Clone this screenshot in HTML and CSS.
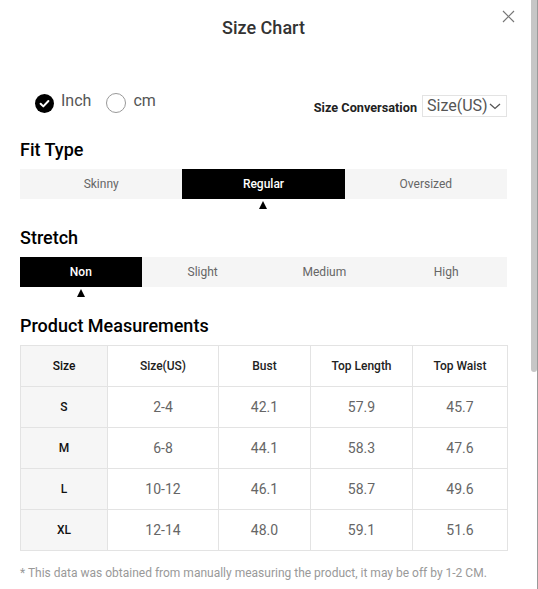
FILE: index.html
```html
<!DOCTYPE html>
<html>
<head>
<meta charset="utf-8">
<link rel="stylesheet" href="styles.css">
</head>
<body>
<div class="modal">
  <h1 class="title">Size Chart</h1>
  <button class="close" aria-label="close">
    <svg width="13" height="13" viewBox="0 0 13 13"><path d="M1 1L12 12M12 1L1 12" stroke="#777" stroke-width="1.2" fill="none"/></svg>
  </button>

  <div class="unit-row">
    <div class="units">
      <span class="check">
        <svg width="19" height="19" viewBox="0 0 19 19"><circle cx="9.5" cy="9.5" r="9.5" fill="#000"/><path d="M5.6 9.8L8.3 12.4L13.4 7" stroke="#fff" stroke-width="2" fill="none" stroke-linecap="round" stroke-linejoin="round"/></svg>
      </span>
      <span class="unit-label">Inch</span>
      <span class="radio"></span>
      <span class="unit-label">cm</span>
    </div>
    <div class="conv">
      <span class="conv-label">Size Conversation</span>
      <span class="select">Size(US)<svg width="12" height="7" viewBox="0 0 12 7"><path d="M1 1L6 5.5L11 1" stroke="#555" stroke-width="1.3" fill="none"/></svg></span>
    </div>
  </div>

  <h2 class="section first">Fit Type</h2>
  <div class="seg seg3">
    <span class="opt">Skinny</span>
    <span class="opt active">Regular</span>
    <span class="opt">Oversized</span>
  </div>
  <div class="tri-row seg3">
    <span></span><span class="tri"></span><span></span>
  </div>

  <h2 class="section">Stretch</h2>
  <div class="seg seg4">
    <span class="opt active">Non</span>
    <span class="opt">Slight</span>
    <span class="opt">Medium</span>
    <span class="opt">High</span>
  </div>
  <div class="tri-row seg4">
    <span class="tri"></span><span></span><span></span><span></span>
  </div>

  <h2 class="section">Product Measurements</h2>
  <table class="chart">
    <colgroup>
      <col class="c1"><col class="c2"><col class="c3"><col class="c4"><col class="c5">
    </colgroup>
    <thead>
      <tr><th class="sz">Size</th><th>Size(US)</th><th>Bust</th><th>Top Length</th><th>Top Waist</th></tr>
    </thead>
    <tbody>
      <tr><th class="sz">S</th><td>2-4</td><td>42.1</td><td>57.9</td><td>45.7</td></tr>
      <tr><th class="sz">M</th><td>6-8</td><td>44.1</td><td>58.3</td><td>47.6</td></tr>
      <tr><th class="sz">L</th><td>10-12</td><td>46.1</td><td>58.7</td><td>49.6</td></tr>
      <tr><th class="sz">XL</th><td>12-14</td><td>48.0</td><td>59.1</td><td>51.6</td></tr>
    </tbody>
  </table>
  <p class="note">* This data was obtained from manually measuring the product, it may be off by 1-2 CM.</p>
</div>
<div class="scroll-thumb"></div>
<div class="edge"></div>
</body>
</html>
```

FILE: styles.css
```css
html, body {
  margin: 0;
  padding: 0;
  background: #fff;
}
body {
  width: 538px;
  height: 589px;
  overflow: hidden;
  font-family: Roboto, "Liberation Sans", Arial, sans-serif;
  position: relative;
}
.modal {
  position: relative;
  padding: 15px 31px 0 20px;
}
.title {
  margin: 0;
  text-align: center;
  font-size: 18px;
  line-height: 26px;
  font-weight: 500;
  color: #333;
}
.close {
  position: absolute;
  left: 502px;
  top: 10px;
  width: 13px;
  height: 13px;
  padding: 0;
  border: 0;
  background: none;
  display: block;
}
.close svg { display: block; }

.unit-row {
  margin-top: 53px;
  height: 24px;
  display: flex;
  align-items: center;
  justify-content: space-between;
}
.units {
  display: flex;
  align-items: center;
  margin-left: 15px;
  margin-bottom: 6px;
}
.check { width: 19px; height: 19px; display: block; }
.check svg { display: block; }
.unit-label {
  font-size: 16px;
  color: #555;
  margin-left: 7px;
  line-height: 20px;
  position: relative;
  top: -2px;
}
.radio {
  width: 18px;
  height: 18px;
  border: 1px solid #999;
  border-radius: 50%;
  margin-left: 15px;
}
.conv {
  display: flex;
  align-items: center;
}
.conv-label {
  font-size: 12.7px;
  font-weight: 700;
  color: #222;
  margin-top: 2px;
}
.select {
  margin-left: 5px;
  height: 22px;
  width: 85px;
  box-sizing: border-box;
  border: 1px solid #e3e3e3;
  display: flex;
  align-items: center;
  padding-left: 4px;
  font-size: 16px;
  color: #555;
  line-height: 20px;
}
.select svg { margin-left: 1px; margin-top: 1px; }

.section {
  margin: 22px 0 8px;
  font-size: 18px;
  line-height: 22px;
  font-weight: 500;
  color: #000;
}
.section.first { margin-top: 21px; }
.seg {
  display: grid;
  height: 30px;
  background: #f5f5f5;
}
.seg3 { grid-template-columns: repeat(3, 1fr); }
.seg4 { grid-template-columns: repeat(4, 1fr); }
.opt {
  display: flex;
  align-items: center;
  justify-content: center;
  font-size: 12px;
  color: #666;
}
.opt.active {
  background: #000;
  color: #fff;
  font-weight: 500;
}
.tri-row {
  display: grid;
  height: 8px;
  margin-top: 2px;
}
.tri-row span {
  display: flex;
  justify-content: center;
}
.tri-row .tri::before {
  content: "";
  width: 0;
  height: 0;
  border-left: 4px solid transparent;
  border-right: 4px solid transparent;
  border-bottom: 8px solid #000;
}
.tri-row + .section { margin-top: 18px; }

.chart {
  width: 487px;
  border-collapse: collapse;
  table-layout: fixed;
}
.c1 { width: 87px; }
.c2 { width: 111px; }
.c3 { width: 92px; }
.c4 { width: 102px; }
.c5 { width: 95px; }
.chart th, .chart td {
  border: 1px solid #e3e3e3;
  height: 40px;
  padding: 0;
  text-align: center;
  vertical-align: middle;
}
.chart thead th {
  font-size: 12px;
  font-weight: 500;
  color: #222;
}
.chart td {
  font-size: 14px;
  color: #666;
}
.chart th.sz {
  background: #f6f6f6;
  font-size: 12px;
  font-weight: 500;
  color: #111;
}
.note {
  margin: 14px 0 0;
  font-size: 12px;
  line-height: 16px;
  color: #999;
}

.scroll-thumb {
  position: absolute;
  left: 531px;
  top: 0;
  width: 6px;
  height: 372px;
  background: #c6c6c6;
  border-radius: 0 0 3px 3px;
}
.edge {
  position: absolute;
  left: 537px;
  top: 0;
  width: 1px;
  height: 589px;
  background: #9a9a9a;
}
```
